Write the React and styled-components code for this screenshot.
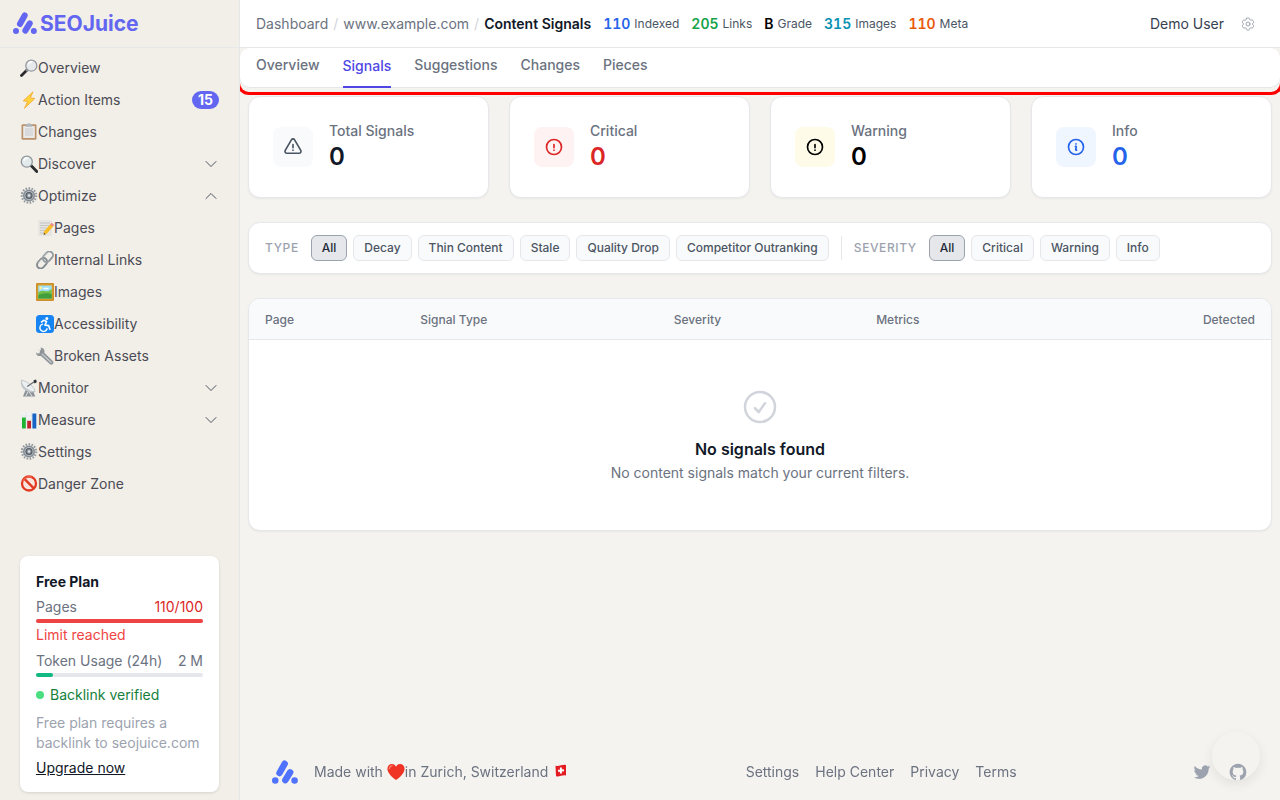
import React, { useState } from "react";
import styled, { createGlobalStyle } from "styled-components";
import {
  HiOutlineCog6Tooth,
  HiOutlineExclamationTriangle,
  HiOutlineExclamationCircle,
  HiOutlineInformationCircle,
  HiOutlineCheckCircle,
  HiOutlineChevronDown,
  HiOutlineChevronUp,
} from "react-icons/hi2";

const LogoMark = ({ color, width }) => (
  <svg width={width} viewBox="0 0 76 70" fill="none" stroke={color} strokeWidth="19" strokeLinecap="round" aria-hidden="true">
    <path d="M22 38 37 11M39 59 53 36" />
    <circle cx="9.500" cy="60" r="9.500" fill={color} stroke="none" />
    <circle cx="66" cy="60" r="9.500" fill={color} stroke="none" />
  </svg>
);

const gear = (
  <>
    <circle cx="9" cy="8.500" r="7.200" fill="none" stroke="#9298a0" strokeWidth="2.200" strokeDasharray="1.600 1.416" />
    <circle cx="9" cy="8.500" r="5.300" fill="#b4bac0" stroke="#878e95" strokeWidth="1.500" />
    <circle cx="9" cy="8.500" r="3" fill="#8a9199" stroke="#555c64" strokeWidth="1.100" />
    <circle cx="9" cy="8.500" r="1.200" fill="#dfe4e8" />
  </>
);

const pictures = {
  overview: (
    <>
      <path d="m7.500 10.500-6 6" stroke="#292b2e" strokeWidth="2.800" strokeLinecap="round" />
      <path d="m8 10-2 2" stroke="#8b8f94" strokeWidth="2" />
      <circle cx="11.300" cy="6.700" r="5.500" fill="#e5e9ec" stroke="#969a9f" strokeWidth="1.300" />
      <path d="M8.300 5.500a4 4 0 0 1 4-2.700" fill="none" stroke="#fff" strokeWidth="1.500" />
    </>
  ),
  bolt: <path d="M13 .8 3.200 9.900l4.500.4-3.200 7L14.800 7.500l-4.500-.6Z" fill="#ffd33e" stroke="#f5a327" strokeWidth=".8" strokeLinejoin="round" />,
  clipboard: (
    <>
      <rect x="1.500" y="1.300" width="15" height="15.500" rx="1.200" fill="#bb926a" />
      <rect x="3.200" y="3" width="11.600" height="12" fill="#e9e9e8" />
      <path d="M5 6h8M5 8h8M5 10h8M5 12h8" stroke="#c9cbcd" />
      <path d="M5.500 1.200h7v2.500h-7z" fill="#aeb2b5" />
      <circle cx="9" cy="1.300" r="1.300" fill="#b9bdc0" />
    </>
  ),
  discover: (
    <>
      <path d="m11 10.500 5.800 6" stroke="#292b2e" strokeWidth="2.800" strokeLinecap="round" />
      <circle cx="6.800" cy="6.700" r="5.500" fill="#e3eaec" stroke="#8f969b" strokeWidth="1.300" />
      <path d="M3.800 5.800a4 4 0 0 1 4-2.700" fill="none" stroke="#fff" strokeWidth="1.500" />
    </>
  ),
  gear,
  memo: (
    <>
      <path d="M2 1h14v16H2z" fill="#e7e5e2" />
      <path d="M4 4h10M4 6.500h9M4 9h7M4 11.500h5M4 14h5" stroke="#c1c3c4" />
      <path d="m8.200 12.300 6.500-7.500 2.700 2.400-6.500 7.300-3.300 1.200Z" fill="#f8bd25" />
      <path d="m14 5.600.9-1.200q1-.8 2 0t.8 1.800l-1 1.200Z" fill="#ec8a8d" />
      <path d="m7.600 15.700.5-2 1.600 1.500Z" fill="#4d4033" />
    </>
  ),
  link: (
    <g fill="none" transform="rotate(-48 9 9)">
      <rect x="-1.200" y="5.400" width="11.600" height="7.200" rx="3.600" stroke="#858c91" strokeWidth="1.900" />
      <rect x="7.600" y="5.400" width="11.600" height="7.200" rx="3.600" stroke="#959ca1" strokeWidth="1.900" />
      <path d="M2 6h5M11 6h5" stroke="#d6dbdd" strokeWidth=".8" />
    </g>
  ),
  image: (
    <>
      <rect x=".3" y=".3" width="17.400" height="17.400" fill="#dba028" />
      <rect x="2.300" y="2.500" width="13.400" height="13" fill="#9ce0fa" />
      <path d="M2.300 9q4-2 7-1t6.400-2v9.500H2.300Z" fill="#74bd48" />
      <path d="M2.300 12q6-3 13.400-1v4.500H2.300Z" fill="#429d3b" />
      <circle cx="4.800" cy="5" r="1.400" fill="#fff096" />
      <path d="M8 5.500h4" stroke="#fff" strokeWidth="1.500" strokeLinecap="round" />
      <path d="M.7.700h16.600v16.600H.7z" fill="none" stroke="#bc7b17" strokeWidth=".8" />
    </>
  ),
  access: (
    <>
      <rect width="18" height="18" rx="3.500" fill="#1685f3" />
      <circle cx="10.800" cy="3.500" r="1.500" fill="#fff" />
      <path d="m5.500 7 2.300-1.700 2.800 1.200-1.700 3.600 3.700.5 1.300 3.700" fill="none" stroke="#fff" strokeWidth="1.600" strokeLinecap="round" strokeLinejoin="round" />
      <path d="M6.500 9.200a3.700 3.700 0 1 0 4.600 4.600" fill="none" stroke="#fff" strokeWidth="1.400" strokeLinecap="round" />
    </>
  ),
  wrench: (
    <>
      <path d="M1.300 1.500 4 4.300l-.5 1.900-1.900.4L.3 5.300Q-.1 8.500 3 9.100l2-.2 8.800 8q1.600 1.400 3 .1t0-3L8.300 5.700q1-4.200-3.700-5.200L5 2.600 3.800 3.700Z" fill="#8f9498" />
      <path d="m5.800 6.800 9.800 9" stroke="#c8ccce" strokeWidth="1.200" />
    </>
  ),
  dish: (
    <>
      <path d="m5.500 11 7-1 2.700 7.500H3Z" fill="#8c9297" />
      <path d="M8 12.500 6 17m3-4 3 4" stroke="#e3e5e7" />
      <path d="M1.600 1.100Q-.5 7 4.500 10.800t10.600 2Z" fill="#c4c9cd" />
      <path d="M1.600 1.100Q6.500 2 11 6t4.100 6.800Q10.500 13.300 5.500 9.200T1.600 1.100Z" fill="#eceff0" stroke="#aaafb4" strokeWidth=".6" />
      <path d="m7.200 7.500 7.400-5" stroke="#63686d" strokeWidth="1.100" />
      <path d="m13.500 1.200 2.600-.6.700 2.700-2.400 1.200Z" fill="#303338" />
    </>
  ),
  chart: (
    <>
      <path d="M1 .8h16v16.700H1z" fill="#f1f2f3" />
      <path d="M1 5h16M1 9h16M1 13h16M6 1v16M11.500 1v16" stroke="#dcdfe2" strokeWidth=".6" />
      <path d="M2 6.500h3.800v11H2z" fill="#20b331" />
      <path d="M7.200 9.800H11v7.700H7.200z" fill="#c3242f" />
      <path d="M12.400 2.500h3.900v15h-3.900z" fill="#1862c6" />
    </>
  ),
  ban: (
    <>
      <circle cx="9" cy="8.500" r="7" fill="#f8e6df" stroke="#e23a22" strokeWidth="2.300" />
      <path d="m4.200 3.700 9.600 9.600" stroke="#e23a22" strokeWidth="2.400" />
      <path d="M3 6A6.700 6.700 0 0 1 12 2.300" fill="none" stroke="#fa8066" strokeWidth=".8" />
    </>
  ),
  heart: (
    <>
      <path d="M9 17Q2.500 12.500.9 8.200C-.8 3.300 2.300.8 4.900.9 7.500 1 8.600 2.700 9 3.800 9.400 2.700 10.500 1 13.100.9c2.600-.1 5.700 2.400 4 7.300Q15.500 12.500 9 17Z" fill="#ef3426" />
      <path d="M2.300 5.500q.5-2.500 2.800-2.800" fill="none" stroke="#ff8576" strokeWidth="1.300" strokeLinecap="round" />
    </>
  ),
  flag: (
    <>
      <path d="M3.500 2.800q3 .3 5.500-.5t5-.4v10.500q-2.500-.4-5 .4t-5 .5Z" fill="#e31b23" />
      <path d="M8.900 4.500v6M6 7.700l6-.4" stroke="#fff" strokeWidth="2" />
    </>
  ),
};

const Emoji = ({ name }) => (
  <EmojiSvg viewBox="0 0 18 18" aria-hidden="true">
    {pictures[name]}
  </EmojiSvg>
);

const menu = [
  { label: "Overview", icon: "overview" },
  { label: "Action Items", icon: "bolt", count: 15 },
  { label: "Changes", icon: "clipboard" },
  { label: "Discover", icon: "discover", group: true },
  { label: "Optimize", icon: "gear", group: true, open: true },
  { label: "Pages", icon: "memo", sub: true },
  { label: "Internal Links", icon: "link", sub: true },
  { label: "Images", icon: "image", sub: true },
  { label: "Accessibility", icon: "access", sub: true },
  { label: "Broken Assets", icon: "wrench", sub: true },
  { label: "Monitor", icon: "dish", group: true },
  { label: "Measure", icon: "chart", group: true },
  { label: "Settings", icon: "gear" },
  { label: "Danger Zone", icon: "ban" },
];

const stats = [
  { value: "110", label: "Indexed", color: "#2563eb" },
  { value: "205", label: "Links", color: "#16a34a" },
  { value: "B", label: "Grade", color: "#000" },
  { value: "315", label: "Images", color: "#0891b2" },
  { value: "110", label: "Meta", color: "#ea580c" },
];

const tabs = ["Overview", "Signals", "Suggestions", "Changes", "Pieces"];

const cards = [
  { label: "Total Signals", Icon: HiOutlineExclamationTriangle, color: "#111827", icon: "#4b5563", bg: "#f9fafb" },
  { label: "Critical", Icon: HiOutlineExclamationCircle, color: "#dc2626", icon: "#dc2626", bg: "#fef2f2" },
  { label: "Warning", Icon: HiOutlineExclamationCircle, color: "#000", icon: "#000", bg: "#fefce8" },
  { label: "Info", Icon: HiOutlineInformationCircle, color: "#2563eb", icon: "#2563eb", bg: "#eff6ff" },
];

const types = ["All", "Decay", "Thin Content", "Stale", "Quality Drop", "Competitor Outranking"];
const severities = ["All", "Critical", "Warning", "Info"];

const Sidebar = () => (
  <Side>
    <Brand href="#">
      <LogoMark color="#6366f1" width={24} />
      <BrandName>SEOJuice</BrandName>
    </Brand>
    <Menu>
      {menu.map((item) => (
        <MenuItem
          key={item.label}
          as={item.group ? "button" : "a"}
          href={item.group ? undefined : "#"}
          aria-expanded={item.group ? Boolean(item.open) : undefined}
          $sub={item.sub}
        >
          <Emoji name={item.icon} />
          <MenuLabel>{item.label}</MenuLabel>
          {item.count && <Count>{item.count}</Count>}
          {item.group && (item.open ? <HiOutlineChevronUp size={16} /> : <HiOutlineChevronDown size={16} />)}
        </MenuItem>
      ))}
    </Menu>
    <Plan>
      <PlanTitle>Free Plan</PlanTitle>
      <Usage>
        <span>Pages</span>
        <UsageValue $over>110/100</UsageValue>
      </Usage>
      <Track>
        <Fill $color="#ef4444" style={{ width: "100%" }} />
      </Track>
      <Limit>Limit reached</Limit>
      <Usage>
        <span>Token Usage (24h)</span>
        <UsageValue>2 M</UsageValue>
      </Usage>
      <Track>
        <Fill $color="#10b981" style={{ width: "10%" }} />
      </Track>
      <Backlink>Backlink verified</Backlink>
      <Note>Free plan requires a backlink to seojuice.com</Note>
      <Upgrade href="#">Upgrade now</Upgrade>
    </Plan>
  </Side>
);

const Filters = ({ title, options }) => {
  let [active, setActive] = useState("All");
  return (
    <FilterGroup role="group" aria-label={title}>
      <FilterTitle>{title}</FilterTitle>
      <Pills>
        {options.map((option) => (
          <Pill key={option} $active={option === active} aria-pressed={option === active} onClick={() => setActive(option)}>
            {option}
          </Pill>
        ))}
      </Pills>
    </FilterGroup>
  );
};

const App = () => {
  let [tab, setTab] = useState("Signals");

  return (
    <>
      <GlobalStyle />
      <Shell>
        <Sidebar />
        <Main>
          <Header>
            <Crumbs aria-label="Breadcrumb">
              <a href="#">Dashboard</a>
              <Slash>/</Slash>
              <a href="#">www.example.com</a>
              <Slash>/</Slash>
              <Current>Content Signals</Current>
            </Crumbs>
            <Stats>
              {stats.map((stat) => (
                <Stat key={stat.label}>
                  <StatValue $color={stat.color}>{stat.value}</StatValue>
                  {stat.label}
                </Stat>
              ))}
            </Stats>
            <User>Demo User</User>
            <IconButton aria-label="Settings">
              <HiOutlineCog6Tooth size={16} />
            </IconButton>
          </Header>
          <TabFrame>
            <Tabs>
              {tabs.map((name) => (
                <Tab key={name} $active={name === tab} onClick={() => setTab(name)}>
                  {name}
                </Tab>
              ))}
            </Tabs>
          </TabFrame>
          <Content>
            <Cards>
              {cards.map(({ label, Icon, color, icon, bg }) => (
                <Card key={label}>
                  <CardIcon $color={icon} $bg={bg}>
                    <Icon size={20} strokeWidth={2} />
                  </CardIcon>
                  <div>
                    <CardLabel>{label}</CardLabel>
                    <CardValue $color={color}>0</CardValue>
                  </div>
                </Card>
              ))}
            </Cards>
            <FilterBar>
              <Filters title="Type" options={types} />
              <Divider />
              <Filters title="Severity" options={severities} />
            </FilterBar>
            <TableCard>
              <Table>
                <thead>
                  <tr>
                    <Th $width="15.2%">Page</Th>
                    <Th $width="24.8%">Signal Type</Th>
                    <Th $width="19.8%">Severity</Th>
                    <Th $width="18.6%">Metrics</Th>
                    <Th $right>Detected</Th>
                  </tr>
                </thead>
                <tbody>
                  <tr>
                    <Empty colSpan={5}>
                      <HiOutlineCheckCircle size={40} color="#d1d5db" />
                      <EmptyTitle>No signals found</EmptyTitle>
                      <EmptyText>No content signals match your current filters.</EmptyText>
                    </Empty>
                  </tr>
                </tbody>
              </Table>
            </TableCard>
          </Content>
          <ChatBubble aria-label="Open chat" />
          <Footer>
            <Made>
              <LogoMark color="#4f73ff" width={26} />
              <MadeText>
                Made with&nbsp;
                <Emoji name="heart" />
                in Zurich, Switzerland&nbsp;
                <Emoji name="flag" />
              </MadeText>
            </Made>
            <FooterLinks>
              <a href="#">Settings</a>
              <a href="#">Help Center</a>
              <a href="#">Privacy</a>
              <a href="#">Terms</a>
            </FooterLinks>
            <Social>
              <a href="#" aria-label="Twitter">
                <svg viewBox="0 0 24 24" width="20" height="20" fill="currentColor">
                  <path d="M8.290 20.251c7.547 0 11.675-6.253 11.675-11.675 0-.178 0-.355-.012-.53A8.348 8.348 0 0022 5.920a8.190 8.190 0 01-2.357.646 4.118 4.118 0 001.804-2.270 8.224 8.224 0 01-2.605.996 4.107 4.107 0 00-6.993 3.743 11.650 11.650 0 01-8.457-4.287 4.106 4.106 0 001.270 5.477A4.072 4.072 0 012.800 9.713v.052a4.105 4.105 0 003.292 4.022 4.095 4.095 0 01-1.853.07 4.108 4.108 0 003.834 2.850A8.233 8.233 0 012 18.407a11.616 11.616 0 006.290 1.840" />
                </svg>
              </a>
              <a href="#" aria-label="GitHub">
                <svg viewBox="0 0 24 24" width="20" height="20" fill="currentColor">
                  <path d="M12 2C6.477 2 2 6.484 2 12.017c0 4.425 2.865 8.180 6.839 9.504.5.092.682-.217.682-.483 0-.237-.008-.868-.013-1.703-2.782.605-3.369-1.343-3.369-1.343-.454-1.158-1.110-1.466-1.110-1.466-.908-.62.069-.608.069-.608 1.003.07 1.531 1.032 1.531 1.032.892 1.530 2.341 1.088 2.910.832.092-.647.350-1.088.636-1.338-2.220-.253-4.555-1.113-4.555-4.951 0-1.093.390-1.988 1.029-2.688-.103-.253-.446-1.272.098-2.650 0 0 .84-.27 2.750 1.026A9.564 9.564 0 0112 6.844c.85.004 1.705.115 2.504.337 1.909-1.296 2.747-1.027 2.747-1.027.546 1.379.202 2.398.1 2.651.64.7 1.028 1.595 1.028 2.688 0 3.848-2.339 4.695-4.566 4.943.359.309.678.92.678 1.855 0 1.338-.012 2.419-.012 2.747 0 .268.18.58.688.482A10.019 10.019 0 0022 12.017C22 6.484 17.522 2 12 2z" />
                </svg>
              </a>
            </Social>
          </Footer>
        </Main>
      </Shell>
    </>
  );
};

export default App;

const GlobalStyle = createGlobalStyle`
  * {
    box-sizing: border-box;
  }
  body {
    margin: 0;
    background: #f5f3ef;
    color: #111827;
    font-family: Inter, "Liberation Sans", sans-serif;
    font-size: 14px;
    line-height: 20px;
  }
  button {
    padding: 0;
    border: none;
    background: none;
    color: inherit;
    font: inherit;
    cursor: pointer;
  }
  a {
    color: inherit;
    text-decoration: none;
  }
  p, h2, h3 {
    margin: 0;
  }
  svg {
    flex-shrink: 0;
  }
`;
const EmojiSvg = styled.svg`
  width: 18px;
  height: 18px;
`;
const Shell = styled.div`
  display: flex;
  min-height: 100vh;
`;
const Side = styled.aside`
  display: flex;
  flex-direction: column;
  flex-shrink: 0;
  width: 240px;
  border-right: 1px solid #e5e7eb;
  background: #f2efe8;
`;
const Brand = styled.a`
  display: flex;
  align-items: center;
  gap: 3px;
  height: 48px;
  padding-left: 13px;
  border-bottom: 1px solid #e5e7eb;
  color: #6366f1;
`;
const BrandName = styled.span`
  font-size: 21px;
  font-weight: 700;
  line-height: 24px;
`;
const Menu = styled.nav`
  display: flex;
  flex-direction: column;
  padding: 4px 20px;
`;
const MenuItem = styled.a`
  display: flex;
  align-items: center;
  height: 32px;
  padding-left: ${({ $sub }) => ($sub ? "16px" : "0")};
  color: #4b5563;
  text-align: left;
`;
const MenuLabel = styled.span`
  flex: 1;
  color: #4b4b55;
`;
const Count = styled.span`
  padding: 0 6px;
  border-radius: 9px;
  background: #6366f1;
  color: white;
  font-weight: 700;
  line-height: 18px;
`;
const Plan = styled.section`
  margin: auto 20px 8px;
  padding: 16px 16px 14px;
  border-radius: 8px;
  background: white;
  box-shadow: 0 1px 3px rgb(0 0 0 / 12%);
  color: #6b7280;
`;
const PlanTitle = styled.h2`
  margin-bottom: 5px;
  color: #111827;
  font-size: 14px;
  font-weight: 700;
`;
const Usage = styled.div`
  display: flex;
  justify-content: space-between;
`;
const UsageValue = styled.span`
  color: ${({ $over }) => ($over ? "#dc2626" : "#6b7280")};
`;
const Track = styled.div`
  height: 4px;
  margin: 2px 0;
  border-radius: 2px;
  background: #e5e7eb;
`;
const Fill = styled.div`
  height: 4px;
  border-radius: 2px;
  background: ${({ $color }) => $color};
`;
const Limit = styled.p`
  margin-bottom: 6px;
  color: #ef4444;
`;
const Backlink = styled.p`
  display: flex;
  align-items: center;
  gap: 6px;
  margin-top: 8px;
  color: #15803d;

  &::before {
    content: "";
    width: 8px;
    height: 8px;
    border-radius: 50%;
    background: #4ade80;
  }
`;
const Note = styled.p`
  margin: 8px 0 5px;
  color: #9ca3af;
`;
const Upgrade = styled.a`
  display: block;
  color: #111827;
  text-decoration: underline;
`;
const Main = styled.main`
  display: flex;
  flex: 1;
  flex-direction: column;
  min-width: 0;
  overflow: hidden;
`;
const Header = styled.header`
  display: flex;
  align-items: center;
  height: 48px;
  padding: 0 24px 0 16px;
  border-bottom: 1px solid #e5e7eb;
  background: white;
`;
const Crumbs = styled.nav`
  display: flex;
  gap: 5px;
  color: #6b7280;
`;
const Slash = styled.span`
  color: #d1d5db;
`;
const Current = styled.span`
  color: #111827;
  font-weight: 600;
`;
const Stats = styled.div`
  display: flex;
  gap: 12px;
  margin-left: 12px;
`;
const Stat = styled.span`
  display: flex;
  gap: 4px;
  color: #4b5563;
  font-size: 12px;
`;
const StatValue = styled.strong`
  color: ${({ $color }) => $color};
  font-size: 14px;
  font-weight: 600;
  font-variant-numeric: tabular-nums;
`;
const User = styled.span`
  margin-left: auto;
  color: #374151;
`;
const IconButton = styled.button`
  display: flex;
  margin-left: 16px;
  color: #9ca3af;
`;
// side borders run past the column so only the bottom edge shows
const TabFrame = styled.div`
  margin: 0 -3px;
  padding-bottom: 4px;
  border: 3px solid red;
  border-top: none;
  border-radius: 0 0 12px 12px;
`;
const Tabs = styled.nav`
  display: flex;
  align-items: flex-start;
  gap: 23px;
  height: 40px;
  padding: 0 16px;
  border-radius: 10px;
  background: white;
  box-shadow: inset 0 -1px 0 #e5e7eb;
`;
const Tab = styled.button`
  padding: ${({ $active }) => ($active ? "8px 0 10px" : "7px 0")};
  border-bottom: ${({ $active }) => ($active ? "2px solid #4f46e5" : "none")};
  color: ${({ $active }) => ($active ? "#4f46e5" : "#6b7280")};
  font-weight: 500;
`;
const Content = styled.div`
  display: flex;
  flex-direction: column;
  gap: 24px;
  padding: 1px 8px 24px;
`;
const Panel = styled.section`
  border: 1px solid #e5e7eb;
  border-radius: 12px;
  background: white;
  box-shadow: 0 1px 2px rgb(0 0 0 / 5%);
`;
const Cards = styled.div`
  display: grid;
  grid-template-columns: repeat(4, 1fr);
  gap: 20px;
`;
const Card = styled(Panel)`
  display: flex;
  align-items: center;
  gap: 16px;
  padding: 24px;
`;
const CardIcon = styled.div`
  display: flex;
  align-items: center;
  justify-content: center;
  width: 40px;
  height: 40px;
  border-radius: 8px;
  background: ${({ $bg }) => $bg};
  color: ${({ $color }) => $color};
`;
const CardLabel = styled.p`
  color: #6b7280;
  font-weight: 500;
`;
const CardValue = styled.p`
  color: ${({ $color }) => $color};
  font-size: 24px;
  font-weight: 600;
  line-height: 32px;
`;
const FilterBar = styled(Panel)`
  display: flex;
  flex-wrap: wrap;
  align-items: center;
  gap: 12px;
  padding: 12px 16px;
`;
const FilterGroup = styled.div`
  display: flex;
  align-items: center;
  gap: 12px;
`;
const FilterTitle = styled.span`
  color: #9ca3af;
  font-size: 12px;
  font-weight: 500;
  letter-spacing: 0.05em;
  text-transform: uppercase;
`;
const Pills = styled.div`
  display: flex;
  gap: 6px;
`;
const Pill = styled.button`
  height: 26px;
  padding: 0 10px;
  border: 1px solid ${({ $active }) => ($active ? "#9ca3af" : "#e5e7eb")};
  border-radius: 6px;
  background: ${({ $active }) => ($active ? "#e5e7eb" : "#f9fafb")};
  color: ${({ $active }) => ($active ? "#1f2937" : "#4b5563")};
  font-size: 12px;
  font-weight: 500;
`;
const Divider = styled.div`
  width: 1px;
  height: 24px;
  background: #e5e7eb;
`;
const TableCard = styled(Panel)`
  overflow: hidden;
`;
const Table = styled.table`
  width: 100%;
  table-layout: fixed;
  border-collapse: collapse;
`;
const Th = styled.th`
  width: ${({ $width }) => $width || "auto"};
  padding: 11px 16px 9px;
  border-bottom: 1px solid #e5e7eb;
  background: #f9fafb;
  color: #6b7280;
  font-size: 12px;
  font-weight: 500;
  text-align: ${({ $right }) => ($right ? "right" : "left")};
`;
const Empty = styled.td`
  padding: 47px 16px;
  text-align: center;

  svg {
    display: block;
    margin: 0 auto 12px;
  }
`;
const EmptyTitle = styled.h3`
  color: #111827;
  font-size: 16px;
  font-weight: 600;
  line-height: 20px;
`;
const EmptyText = styled.p`
  margin-top: 4px;
  color: #6b7280;
`;
const ChatBubble = styled.button`
  position: fixed;
  right: 20px;
  bottom: 20px;
  width: 48px;
  height: 48px;
  border-radius: 50%;
  background: #f5f3ef;
  box-shadow: 0 4px 12px rgb(0 0 0 / 8%);
`;
const Footer = styled.footer`
  position: relative;
  display: flex;
  align-items: center;
  justify-content: space-between;
  height: 56px;
  margin-top: auto;
  padding: 0 32px;
  color: #6b7280;
`;
const Made = styled.div`
  display: flex;
  align-items: center;
  gap: 16px;
`;
const MadeText = styled.span`
  display: flex;
  align-items: center;
`;
const FooterLinks = styled.nav`
  display: flex;
  gap: 16px;
`;
const Social = styled.div`
  display: flex;
  gap: 16px;
  color: #9ca3af;

  svg {
    display: block;
  }
`;
